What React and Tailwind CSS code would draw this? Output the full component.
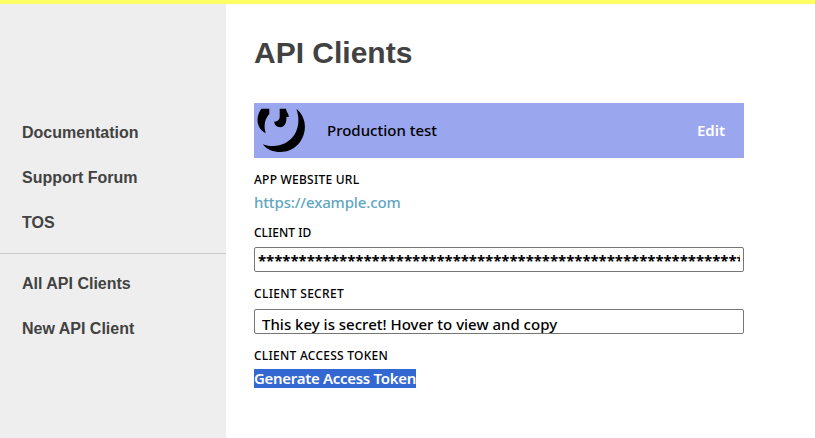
const body = "font-['Noto_Sans',sans-serif]";

function NavLink({ className = "", children }) {
  return (
    <a href="#" className={`block h-[45px] w-fit whitespace-nowrap leading-[45px] ${className}`}>
      {children}
    </a>
  );
}

function Logo() {
  return (
    <svg viewBox="0 0 55 55" className="h-[55px] w-[55px] shrink-0">
      <path d="M7.4 5.8H15.3V11C12.5 14 10.6 18 10.6 22.5C10.6 25 10.8 27.5 11.8 30.3C7 28 3.5 23 3.5 17.3C3.5 12.5 5 9 7.4 5.8Z" />
      <path d="M25.7 5.8H32.2C31.8 8.6 35 10.6 34.8 14H32.3C33 19.8 30.4 24.2 26.2 24.2C22.5 24.2 20.3 21.8 20.3 18.6C23.6 18.8 26 16.2 25.7 13Z" />
      <path d="M42.4 5.8C47.5 10 50.9 16.5 50.9 23.5C50.9 38 40 49 26.5 49C19.5 49 12.7 46.5 8.7 41.2C31 49 51 31 42.4 5.8Z" />
    </svg>
  );
}

function Label({ className = "", children }) {
  return (
    <div className={`h-4 w-fit whitespace-nowrap text-xs font-medium leading-4 ${className}`}>{children}</div>
  );
}

export default function App() {
  return (
    <div className="flex h-[438px] w-[815px] flex-col overflow-hidden bg-white">
      <div className="h-1 shrink-0 bg-[#ffff64]" />
      <div className="flex flex-1">
        <nav className="w-[226px] shrink-0 bg-[#eeeeee] pt-[106px] font-['Liberation_Sans',Arial,sans-serif] text-base font-bold text-[#424242]">
          <div className="h-[143px] pl-[22px]">
            <NavLink>Documentation</NavLink>
            <NavLink>Support Forum</NavLink>
            <NavLink>TOS</NavLink>
          </div>
          <div className="border-t border-[#cccccc] pl-[22px] pt-[7px]">
            <NavLink>All API Clients</NavLink>
            <NavLink>New API Client</NavLink>
          </div>
        </nav>
        <main className={`flex w-[518px] flex-col pl-7 text-black ${body}`}>
          <h1 className="mt-[31px] h-9 w-fit whitespace-nowrap font-['Liberation_Sans',Arial,sans-serif] text-[30px] font-bold leading-9 text-[#424242]">
            API Clients
          </h1>
          <div className="mt-8 flex h-[55px] items-center bg-[#9aa6ed]">
            <Logo />
            <span className="ml-[18px] whitespace-nowrap text-[15px] font-medium">Production test</span>
            <a href="#" className="ml-auto mr-[19px] text-[15px] font-semibold text-white">Edit</a>
          </div>
          <Label className="mt-3.5 tracking-[0.24px]">APP WEBSITE URL</Label>
          <a href="#" className="mt-1 h-5 w-fit whitespace-nowrap text-[15px] font-medium leading-5 tracking-[-0.14px] text-[#5fa6c1]">
            https://example.com
          </a>
          <Label className="mt-[13px]">CLIENT ID</Label>
          <div className="mt-1.5 h-[25px] rounded-[2px] border border-[#767676] px-[3px]">
            <div className="overflow-hidden whitespace-nowrap text-[15px] font-bold leading-[25px] tracking-[-0.02px]">
              {"*".repeat(60)}
            </div>
          </div>
          <Label className="mt-3.5 tracking-[0.3px]">CLIENT SECRET</Label>
          <div className="mt-[7px] h-[25px] overflow-hidden rounded-[2px] border border-[#767676] pl-[7px] pt-[3px]">
            <div className="w-fit whitespace-nowrap text-[15px] font-medium leading-[22px]">
              This key is secret! Hover to view and copy
            </div>
          </div>
          <Label className="mt-3.5 tracking-[0.25px]">CLIENT ACCESS TOKEN</Label>
          <a href="#" className="mt-[5px] h-[19px] w-[162px] whitespace-nowrap bg-[#3367d1] text-[15px] font-semibold leading-[19px] tracking-[-0.3px] text-white">
            Generate Access Token
          </a>
        </main>
      </div>
    </div>
  );
}
